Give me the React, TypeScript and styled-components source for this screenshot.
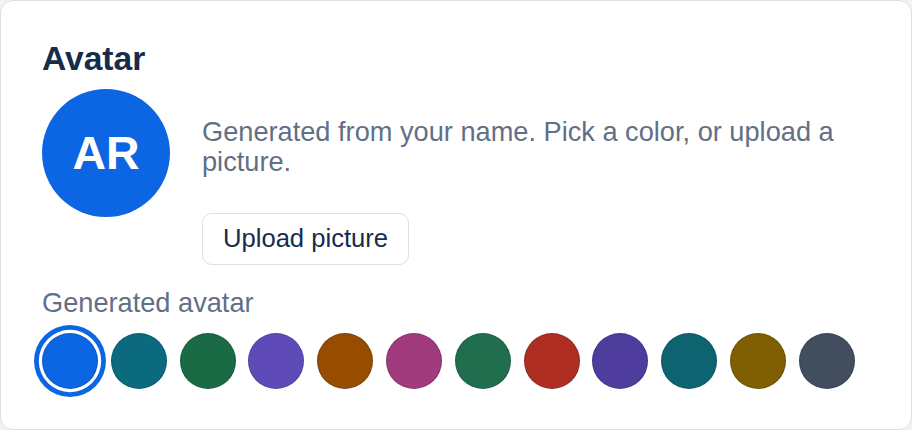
import React, { useState } from "react";
import styled, { createGlobalStyle } from "styled-components";

const GlobalStyle = createGlobalStyle`
  html, body {
    margin: 0;
    padding: 0;
    background: #f1f2f4;
  }
  body {
    font-family: "Liberation Sans", Arial, sans-serif;
  }
  * { box-sizing: border-box; }
`;

const Card = styled.section`
  width: 912px;
  height: 430px;
  background: #ffffff;
  border: 1px solid #dcdfe4;
  border-radius: 12.8px;
  padding: 38px 41px 0;
  display: flex;
  flex-direction: column;
`;

const Title = styled.h2`
  margin: 0;
  font-size: 33.6px;
  line-height: 40px;
  font-weight: 700;
  color: #172b4d;
`;

const Row = styled.div`
  display: flex;
  align-items: flex-start;
  gap: 32px;
  margin-top: 10px;
`;

const AvatarCircle = styled.div<{ $bg: string }>`
  width: 128px;
  height: 128px;
  flex: none;
  border-radius: 50%;
  background: ${(p) => p.$bg};
  color: #ffffff;
  display: flex;
  align-items: center;
  justify-content: center;
  font-size: 46.4px;
  font-weight: 700;
`;

const Info = styled.div`
  display: flex;
  flex-direction: column;
  align-items: flex-start;
  gap: 36.4px;
  padding-top: 27.6px;
`;

const Description = styled.p`
  margin: 0;
  font-size: 27.2px;
  line-height: 30px;
  color: #626f86;
`;

const UploadButton = styled.button`
  height: 52px;
  padding: 0 20px;
  background: #ffffff;
  border: 1.6px solid #dcdfe4;
  border-radius: 9.6px;
  font-family: inherit;
  font-size: 25.6px;
  color: #172b4d;
  cursor: pointer;
`;

const Label = styled.div`
  margin-top: 22px;
  font-size: 27.2px;
  line-height: 32px;
  color: #626f86;
`;

const Swatches = styled.div`
  display: flex;
  gap: 12.8px;
  margin-top: 14px;
`;

const Swatch = styled.button<{ $color: string; $selected: boolean }>`
  width: 56px;
  height: 56px;
  flex: none;
  padding: 0;
  border-radius: 50%;
  border: 1px solid rgba(9, 30, 66, 0.2);
  background: ${(p) => p.$color};
  cursor: pointer;
  box-shadow: ${(p) =>
    p.$selected ? "0 0 0 3.2px #ffffff, 0 0 0 8px #0c66e4" : "none"};
`;

const colors = [
  "#0c66e4",
  "#0b6a7e",
  "#1a6b45",
  "#5e4bb8",
  "#974c00",
  "#a23b7e",
  "#216e4e",
  "#ae2e24",
  "#4f3d9e",
  "#0e6370",
  "#7f5f01",
  "#424e5e",
];

export default function App() {
  const [selected, setSelected] = useState(0);
  return (
    <>
      <GlobalStyle />
      <Card>
        <Title>Avatar</Title>
        <Row>
          <AvatarCircle $bg={colors[selected]}>AR</AvatarCircle>
          <Info>
            <Description>
              Generated from your name. Pick a color, or upload a picture.
            </Description>
            <UploadButton>Upload picture</UploadButton>
          </Info>
        </Row>
        <Label>Generated avatar</Label>
        <Swatches>
          {colors.map((c, i) => (
            <Swatch
              key={c + i}
              $color={c}
              $selected={i === selected}
              aria-label={`Color ${i + 1}`}
              onClick={() => setSelected(i)}
            />
          ))}
        </Swatches>
      </Card>
    </>
  );
}
